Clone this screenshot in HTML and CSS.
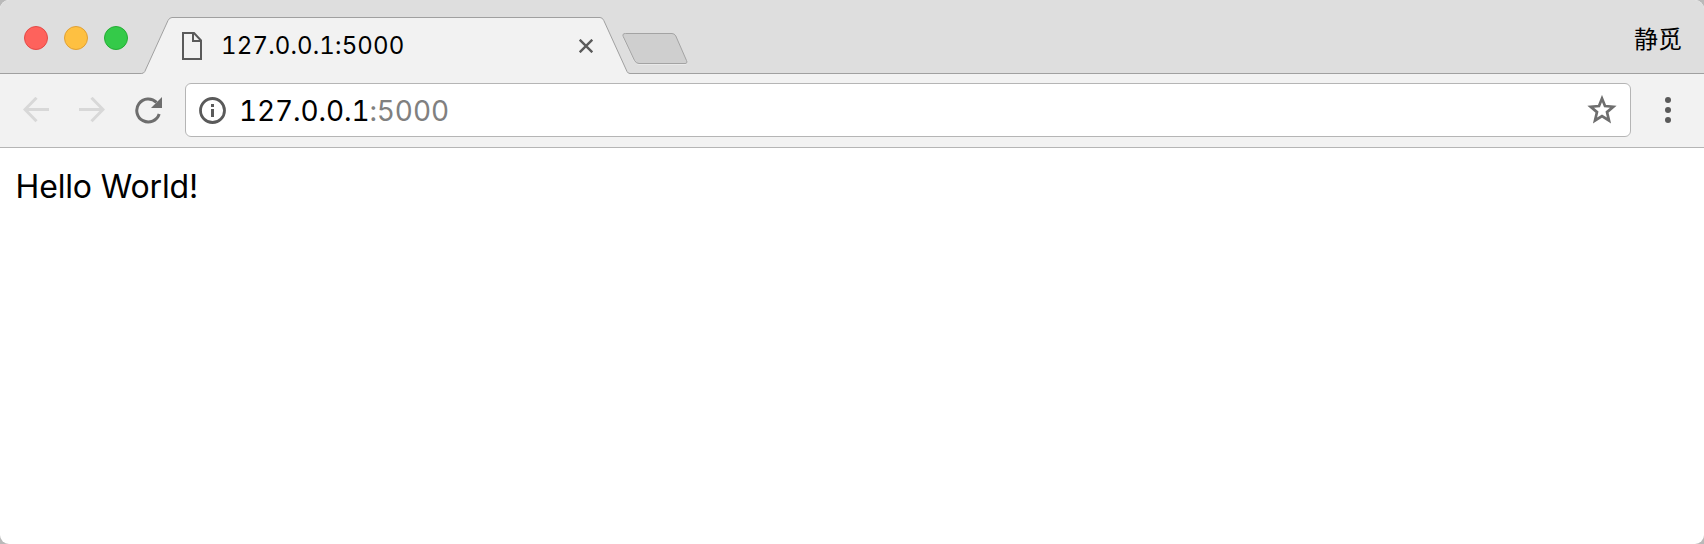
FILE: index.html
```
<!DOCTYPE html>
<html lang="en">
<head>
<meta charset="utf-8">
<title>127.0.0.1:5000</title>
<link rel="stylesheet" href="styles.css">
</head>
<body>
<div class="window">
  <header class="titlebar">
    <div class="lights">
      <span class="light close"></span>
      <span class="light minimize"></span>
      <span class="light maximize"></span>
    </div>
    <div class="tab">
      <svg class="tab-shape" width="488" height="58" viewBox="0 0 488 58">
        <path d="M-1 57.500H.5Q2.700 57.500 3.800 55.500L27 4.500Q28.500 1.500 31 1.500H459Q461.500 1.500 462.800 4.500L486 55.500Q487 57.500 489 57.500V58H-1Z" fill="#f2f2f2"/>
        <path d="M-1 57.500H.5Q2.700 57.500 3.800 55.500L27 4.500Q28.500 1.500 31 1.500H459Q461.500 1.500 462.800 4.500L486 55.500Q487 57.500 489 57.500" fill="none" stroke="#a0a0a0"/>
      </svg>
      <svg class="page-icon" width="20" height="28" viewBox="0 0 20 28" fill="none" stroke="#5a5a5a" stroke-width="2">
        <path d="M1 1H12L19 8.500V27H1Z"/><path d="M11 1V9H19"/>
      </svg>
      <span class="tab-title">127.0.0.1:5000</span>
      <svg class="tab-close" width="14" height="14" viewBox="0 0 14 14" stroke="#5a5a5a" stroke-width="2.400"><path d="M.7.7 13.300 13.300M13.300.7.7 13.300"/></svg>
    </div>
    <svg class="new-tab" width="66" height="33" viewBox="0 0 66 33">
      <path d="M3.500 .5H50Q52.500 .5 53.800 3L64.500 27.500Q65.800 30.500 63 30.500H17Q14 30.500 12.500 27.500L1.200 3.500Q0 .5 3.500 .5Z" transform="translate(0 1)" fill="none" stroke="#e9e9e9"/>
      <path d="M3.500 .5H50Q52.500 .5 53.800 3L64.500 27.500Q65.800 30.500 63 30.500H17Q14 30.500 12.500 27.500L1.200 3.500Q0 .5 3.500 .5Z" fill="#cfcfcf" stroke="#a3a3a3"/>
    </svg>
    <span class="profile">静觅</span>
  </header>
  <nav class="toolbar">
    <svg class="back" width="26" height="26" viewBox="0 0 26 26" fill="none" stroke="#d8d8d8" stroke-width="3"><path d="M26 12.500H2M13.500 .8 2 12.500 13.500 24.300"/></svg>
    <svg class="forward" width="26" height="26" viewBox="0 0 26 26" fill="none" stroke="#d8d8d8" stroke-width="3"><path d="M0 12.500H24M12.500 .8 24 12.500 12.500 24.300"/></svg>
    <svg class="reload" width="27" height="27" viewBox="0 0 27 27"><path d="M21.500 5.400A11.500 11.500 0 1 0 24.200 17" fill="none" stroke="#6e6e6e" stroke-width="3"/><path d="M27 0V11H16Z" fill="#6e6e6e"/></svg>
    <div class="omnibox">
      <svg class="info" width="27" height="27" viewBox="0 0 27 27"><circle cx="13.500" cy="13.500" r="12" fill="none" stroke="#5a5a5a" stroke-width="2.800"/><path d="M12 7H15V10H12ZM12 12H15V20H12Z" fill="#5a5a5a"/></svg>
      <span class="url">127.0.0.1<span class="port">:5000</span></span>
      <svg class="star" width="30" height="29" viewBox="0 0 30 29"><path d="M15 3.500 18 11 26.300 11.700 20 17.100 22 25.500 15 21 8 25.500 10 17.100 3.700 11.700 12 11Z" fill="none" stroke="#6e6e6e" stroke-width="2.700"/></svg>
    </div>
    <svg class="menu" width="6" height="26" viewBox="0 0 6 26" fill="#5a5a5a"><circle cx="3" cy="3" r="3"/><circle cx="3" cy="13" r="3"/><circle cx="3" cy="23" r="3"/></svg>
  </nav>
  <main class="page">Hello World!</main>
</div>
</body>
</html>
```
FILE: styles.css
```
* { box-sizing: border-box; }
body {
  margin: 0;
  background: #b9b9b9;
  font-family: Inter, "Noto Sans CJK SC", sans-serif;
  color: #000;
}
svg { display: block; flex: none; }
.window {
  display: flex;
  flex-direction: column;
  height: 544px;
  border-radius: 9px;
  overflow: hidden;
  background: #fff;
}
.titlebar {
  display: flex;
  height: 74px;
  flex: none;
  background: #dedede;
  border-bottom: 1px solid #a0a0a0;
}
.lights { display: flex; gap: 16px; padding: 26px 0 0 24px; }
.light { width: 24px; height: 24px; border-radius: 50%; border: 1px solid; }
.close { background: #fe625c; border-color: #e44a47; }
.minimize { background: #fec041; border-color: #e0a035; }
.maximize { background: #34ca49; border-color: #24ad34; }
.tab {
  position: relative;
  display: flex;
  width: 488px;
  height: 58px;
  margin: 16px 0 0 13px;
  padding-left: 41px;
}
.tab-shape { position: absolute; left: 0; top: 0; overflow: visible; }
.page-icon, .tab-title, .tab-close { position: relative; }
.page-icon { margin-top: 16px; }
.tab-title, .url {
  font-feature-settings: "tnum", "calt" 0;
  white-space: nowrap;
}
.tab-title {
  flex: 1;
  margin: 15px 0 0 19px;
  font-size: 24px;
  line-height: 30px;
  letter-spacing: .15px;
}
.tab-close { margin: 23px 36px 0 0; }
.new-tab { margin: 33px 0 0 -7.500px; position: relative; }
.profile { margin: 23px 22px 0 auto; font-size: 24px; line-height: 34px; }
.toolbar {
  display: flex;
  height: 74px;
  flex: none;
  background: #f2f2f2;
  border-bottom: 1px solid #b5b5b5;
}
.back { margin: 23px 0 0 23px; }
.forward { margin: 23px 0 0 30px; }
.reload { margin: 23px 0 0 30px; }
.omnibox {
  display: flex;
  width: 1446px;
  height: 54px;
  margin: 9px 0 0 23px;
  background: #fff;
  border: 1px solid #b5b5b5;
  border-radius: 6px;
}
.info { margin: 13px 0 0 13px; }
.url {
  flex: 1;
  margin: 10px 0 0 13px;
  font-size: 28px;
  line-height: 34px;
  letter-spacing: -.12px;
}
.port { color: #808080; }
.star { margin: 11px 13px 0 0; }
.menu { margin: 23px 0 0 34px; }
.page { flex: 1; padding: 19px 15.500px; font-size: 32px; line-height: 40px; letter-spacing: -.15px; }
```
